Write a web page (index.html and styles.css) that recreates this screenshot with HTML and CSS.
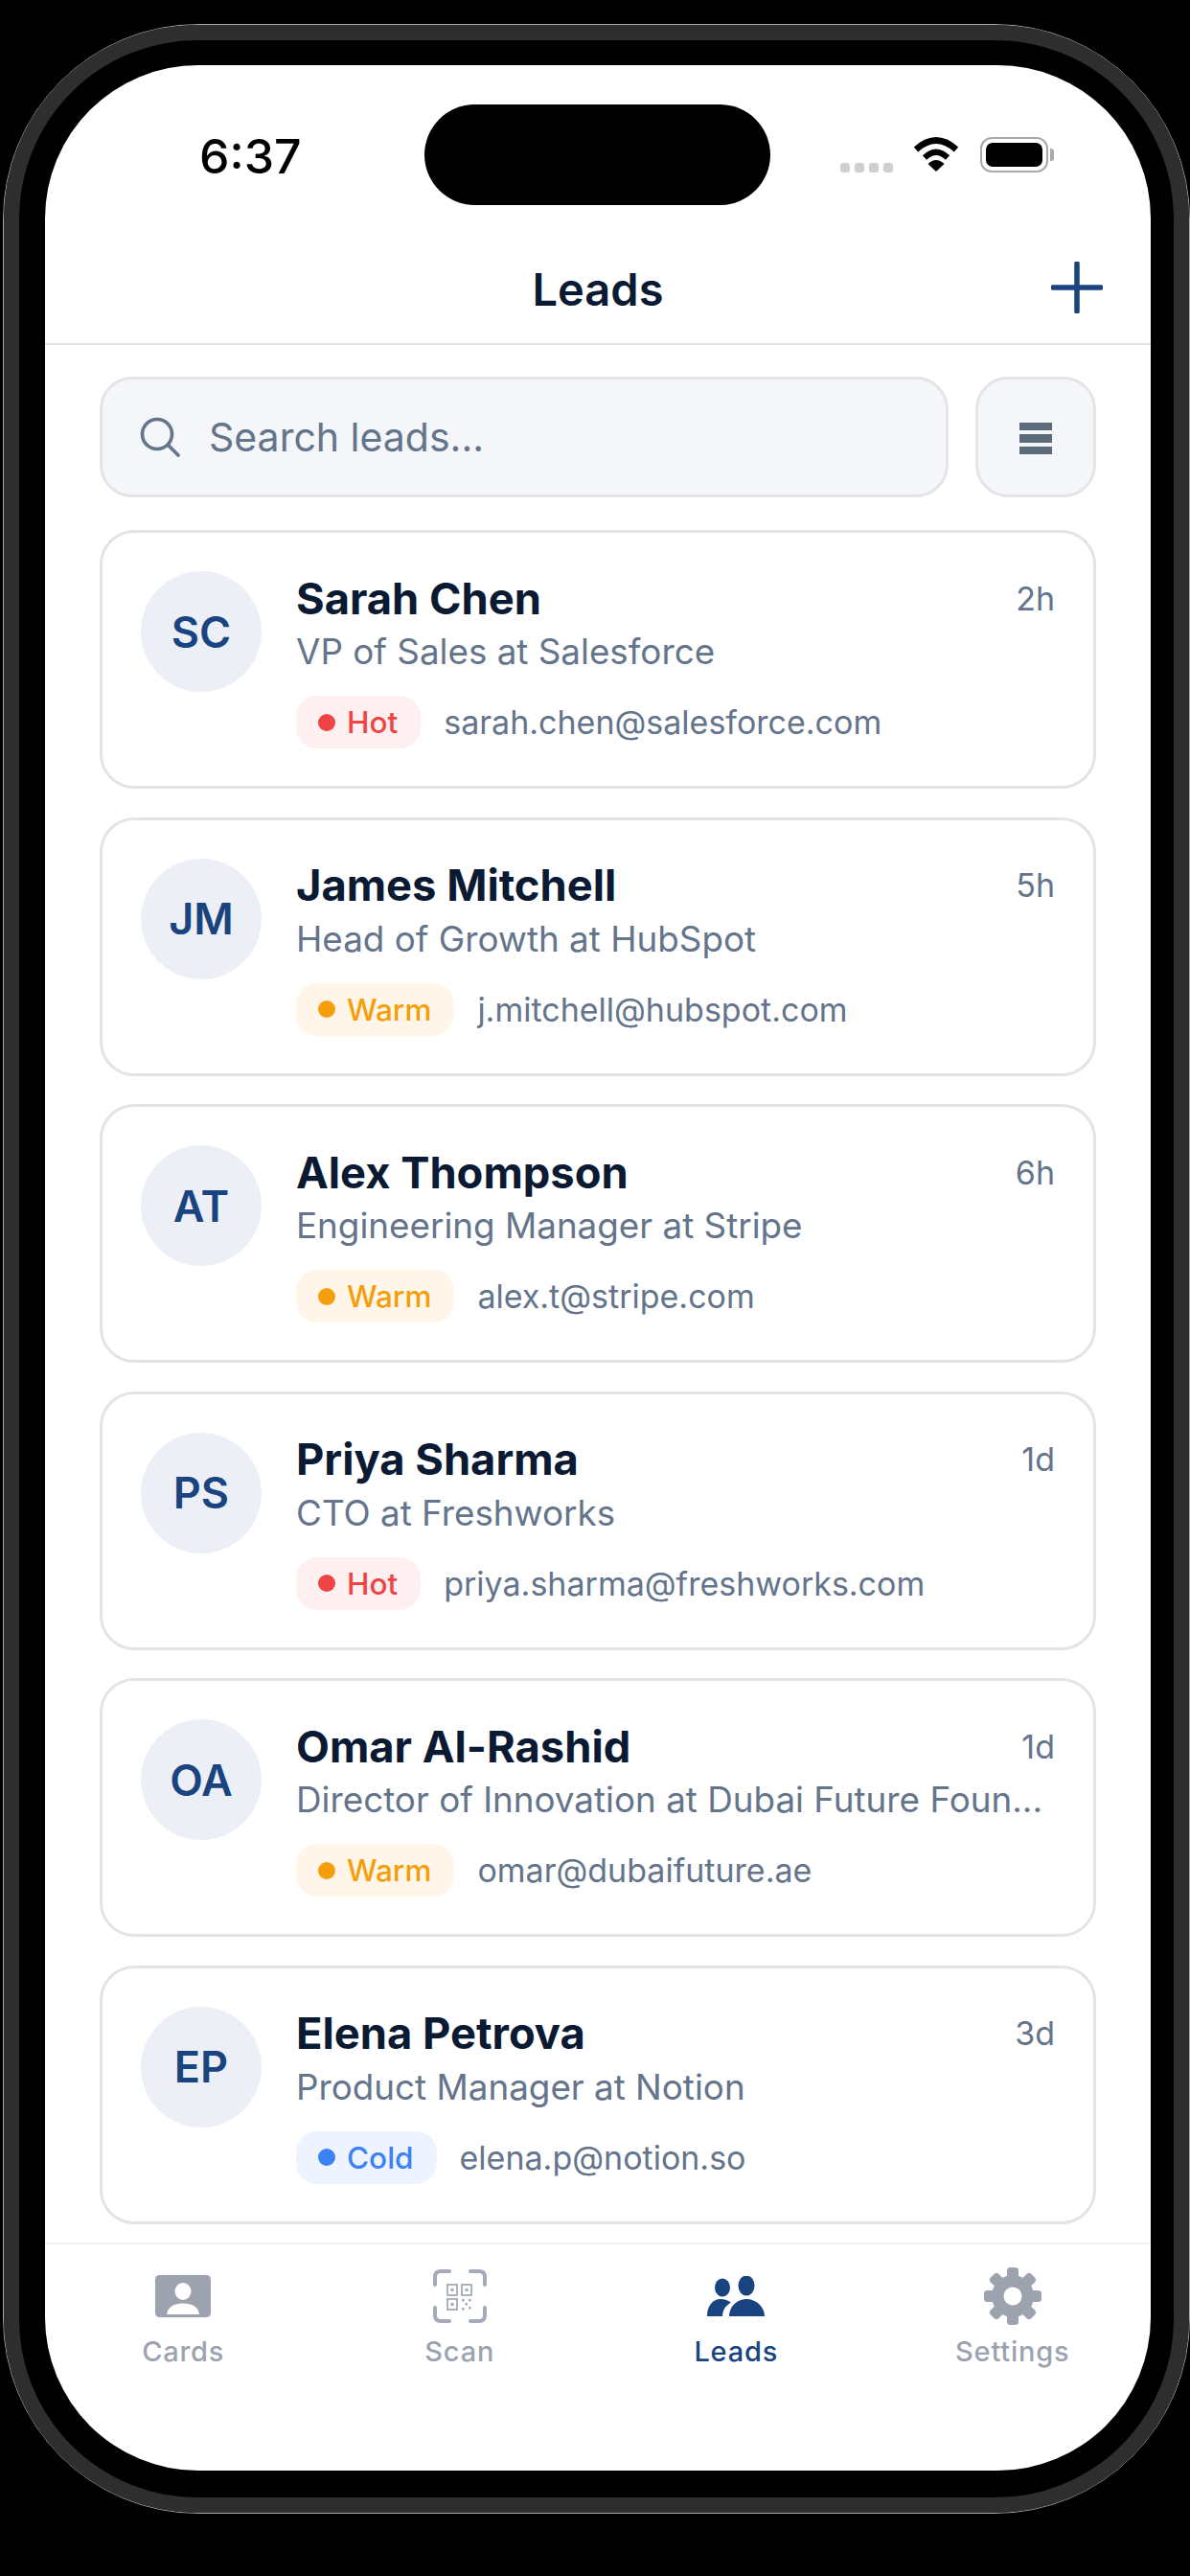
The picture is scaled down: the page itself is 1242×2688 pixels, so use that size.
FILE: index.html
```html
<!DOCTYPE html>
<html lang="en">
<head>
    <meta charset="UTF-8">
    <meta name="viewport" content="width=device-width, initial-scale=1.0">
    <title>Leads</title>
    <link rel="stylesheet" href="styles.css">
</head>
<body>
    <div class="phone">
        <div class="bezel">
            <div class="screen">
                <div class="island"></div>

                <div class="status-bar">
                    <span class="clock">6:37</span>
                    <div class="status-icons">
                        <div class="signal"><i></i><i></i><i></i><i></i></div>
                        <svg class="wifi" viewBox="0 0 48 36">
                            <path d="M3 13Q24 -6 45 13" fill="none" stroke="#000" stroke-width="6.5"/>
                            <path d="M12 21.5Q24 10 36 21.5" fill="none" stroke="#000" stroke-width="6"/>
                            <path d="M24 36L15.5 28Q24 20 32.5 28Z" fill="#000"/>
                        </svg>
                        <div class="battery"><div class="battery-level"></div></div>
                    </div>
                </div>

                <header class="nav">
                    <h1>Leads</h1>
                    <svg class="add" viewBox="0 0 54 54">
                        <path d="M27 2V52M2 27H52" fill="none" stroke="#1a4480" stroke-width="5.5" stroke-linecap="round"/>
                    </svg>
                </header>

                <div class="toolbar">
                    <div class="search">
                        <svg class="search-icon" viewBox="0 0 42 42">
                            <circle cx="18" cy="18" r="15.5" fill="none" stroke="#64748b" stroke-width="3.6"/>
                            <path d="M29.5 29.5L40 40" fill="none" stroke="#64748b" stroke-width="3.6" stroke-linecap="round"/>
                        </svg>
                        <span>Search leads...</span>
                    </div>
                    <div class="filter">
                        <div class="filter-icon"><i></i><i></i><i></i></div>
                    </div>
                </div>

                <div class="list">
                    <div class="card">
                        <div class="avatar">SC</div>
                        <div class="info">
                            <div class="top-row"><span class="name">Sarah Chen</span><span class="ago">2h</span></div>
                            <div class="role">VP of Sales at Salesforce</div>
                            <div class="meta">
                                <span class="badge hot"><i></i>Hot</span>
                                <span class="email">sarah.chen@salesforce.com</span>
                            </div>
                        </div>
                    </div>

                    <div class="card">
                        <div class="avatar">JM</div>
                        <div class="info">
                            <div class="top-row"><span class="name">James Mitchell</span><span class="ago">5h</span></div>
                            <div class="role">Head of Growth at HubSpot</div>
                            <div class="meta">
                                <span class="badge warm"><i></i>Warm</span>
                                <span class="email">j.mitchell@hubspot.com</span>
                            </div>
                        </div>
                    </div>

                    <div class="card">
                        <div class="avatar">AT</div>
                        <div class="info">
                            <div class="top-row"><span class="name">Alex Thompson</span><span class="ago">6h</span></div>
                            <div class="role">Engineering Manager at Stripe</div>
                            <div class="meta">
                                <span class="badge warm"><i></i>Warm</span>
                                <span class="email">alex.t@stripe.com</span>
                            </div>
                        </div>
                    </div>

                    <div class="card">
                        <div class="avatar">PS</div>
                        <div class="info">
                            <div class="top-row"><span class="name">Priya Sharma</span><span class="ago">1d</span></div>
                            <div class="role">CTO at Freshworks</div>
                            <div class="meta">
                                <span class="badge hot"><i></i>Hot</span>
                                <span class="email">priya.sharma@freshworks.com</span>
                            </div>
                        </div>
                    </div>

                    <div class="card">
                        <div class="avatar">OA</div>
                        <div class="info">
                            <div class="top-row"><span class="name">Omar Al-Rashid</span><span class="ago">1d</span></div>
                            <div class="role">Director of Innovation at Dubai Future Foun...</div>
                            <div class="meta">
                                <span class="badge warm"><i></i>Warm</span>
                                <span class="email">omar@dubaifuture.ae</span>
                            </div>
                        </div>
                    </div>

                    <div class="card">
                        <div class="avatar">EP</div>
                        <div class="info">
                            <div class="top-row"><span class="name">Elena Petrova</span><span class="ago">3d</span></div>
                            <div class="role">Product Manager at Notion</div>
                            <div class="meta">
                                <span class="badge cold"><i></i>Cold</span>
                                <span class="email">elena.p@notion.so</span>
                            </div>
                        </div>
                    </div>
                </div>

                <nav class="tabs">
                    <div class="tab">
                        <div class="tab-icon">
                            <svg width="58" height="44" viewBox="0 0 58 44">
                                <rect width="58" height="44" rx="4.5" fill="#9ca3af"/>
                                <ellipse cx="29" cy="17" rx="8.5" ry="9" fill="#fff"/>
                                <path d="M12 41C13 33 20 29.500 29 29.500S45 33 46 41Z" fill="#fff"/>
                            </svg>
                        </div>
                        <span>Cards</span>
                    </div>
                    <div class="tab">
                        <div class="tab-icon">
                            <svg width="56" height="56" viewBox="0 0 56 56">
                                <g fill="none" stroke="#a4abb8" stroke-width="4" stroke-linecap="round">
                                    <path d="M2 16V8Q2 2 8 2H17"/>
                                    <path d="M39 2H48Q54 2 54 8V16"/>
                                    <path d="M2 40V48Q2 54 8 54H17"/>
                                    <path d="M39 54H48Q54 54 54 48V40"/>
                                </g>
                                <g fill="none" stroke="#a4abb8" stroke-width="1.8">
                                    <rect x="15" y="16" width="10" height="11"/>
                                    <rect x="30" y="16" width="10" height="11"/>
                                    <rect x="15" y="31" width="10" height="11"/>
                                </g>
                                <g fill="#a4abb8">
                                    <rect x="18.500" y="20" width="3" height="3"/>
                                    <rect x="33.500" y="20" width="3" height="3"/>
                                    <rect x="18.500" y="35" width="3" height="3"/>
                                    <rect x="30" y="31" width="2.500" height="2.500"/>
                                    <rect x="37" y="31" width="2.500" height="2.500"/>
                                    <rect x="33.500" y="35" width="2.500" height="2.500"/>
                                    <rect x="30" y="40" width="2.500" height="2.500"/>
                                    <rect x="37" y="39" width="2.500" height="2.500"/>
                                </g>
                            </svg>
                        </div>
                        <span>Scan</span>
                    </div>
                    <div class="tab active">
                        <div class="tab-icon">
                            <svg width="60" height="42" viewBox="0 0 60 42">
                                <g fill="#1a4480">
                                    <ellipse cx="16" cy="12" rx="8" ry="9.500"/>
                                    <ellipse cx="41" cy="10" rx="8.500" ry="10.500"/>
                                    <path d="M0 42C0 31 6 24 14 24C18 24 21 25 25 27.500C19 31 16 36 16 42Z"/>
                                    <path d="M23 42C23 32 31 24 41 24S60 32 60 42Z"/>
                                </g>
                            </svg>
                        </div>
                        <span>Leads</span>
                    </div>
                    <div class="tab">
                        <div class="tab-icon">
                            <svg width="60" height="60" viewBox="0 0 60 60">
                                <g fill="#9ca3af">
                                    <rect x="24" y="0" width="12" height="60" rx="3.500"/>
                                    <rect x="24" y="0" width="12" height="60" rx="3.500" transform="rotate(45 30 30)"/>
                                    <rect x="24" y="0" width="12" height="60" rx="3.500" transform="rotate(90 30 30)"/>
                                    <rect x="24" y="0" width="12" height="60" rx="3.500" transform="rotate(135 30 30)"/>
                                    <circle cx="30" cy="30" r="22"/>
                                </g>
                                <circle cx="30" cy="30" r="9.500" fill="#fff"/>
                            </svg>
                        </div>
                        <span>Settings</span>
                    </div>
                </nav>
            </div>
        </div>
    </div>
</body>
</html>
```

FILE: styles.css
```css
* {
    box-sizing: border-box;
}
body {
    margin: 0;
    width: 1242px;
    height: 2688px;
    background: #000;
    font-family: Inter, "Noto Sans", sans-serif;
    overflow: hidden;
}
.phone {
    width: 1239px;
    height: 2598px;
    margin: 25px 0 0 3px;
    border: 1.5px solid #a8a8a8;
    border-radius: 204px;
}
.bezel {
    height: 100%;
    border: 16px solid #2e2e2e;
    border-radius: 202px;
    background: #000;
    padding: 26px 24px 28px 27px;
}
.screen {
    position: relative;
    height: 100%;
    background: #fff;
    border-radius: 160px;
    display: flex;
    flex-direction: column;
    overflow: hidden;
}
.island {
    position: absolute;
    top: 41px;
    left: 396px;
    width: 361px;
    height: 105px;
    border-radius: 53px;
    background: #000;
}

/* status bar */
.status-bar {
    height: 178px;
    flex-shrink: 0;
    display: flex;
    justify-content: space-between;
    padding: 67px 107px 0 161px;
}
.clock {
    font-size: 50px;
    font-weight: 500;
    line-height: 56px;
    color: #000;
}
.status-icons {
    display: flex;
    align-items: flex-start;
    padding-top: 8px;
}
.signal {
    display: flex;
    gap: 5px;
    margin-top: 27px;
    margin-right: 21px;
}
.signal i {
    width: 10px;
    height: 10px;
    border-radius: 3px;
    background: #cfcfcf;
}
.wifi {
    width: 48px;
    height: 36px;
    margin-right: 22px;
}
.battery {
    position: relative;
    width: 71px;
    height: 37px;
    padding: 4px;
    border: 2px solid #a9a9a9;
    border-radius: 12px;
}
.battery::after {
    content: "";
    position: absolute;
    top: 10px;
    right: -8px;
    width: 4px;
    height: 13px;
    border-radius: 0 3px 3px 0;
    background: #a9a9a9;
}
.battery-level {
    height: 100%;
    border-radius: 7px;
    background: #000;
}

/* nav */
.nav {
    position: relative;
    height: 114px;
    flex-shrink: 0;
    display: flex;
    align-items: center;
    justify-content: center;
    border-bottom: 2.5px solid #e3e5e8;
    padding-bottom: 2px;
}
.nav h1 {
    margin: 0;
    font-size: 47px;
    font-weight: 600;
    color: #0b1a33;
}
.add {
    position: absolute;
    right: 50px;
    top: 27px;
    width: 54px;
    height: 54px;
}

/* search row */
.toolbar {
    display: flex;
    gap: 28px;
    padding: 33px 57px 0 57px;
    flex-shrink: 0;
}
.search {
    flex: 1;
    height: 126px;
    display: flex;
    align-items: center;
    gap: 30px;
    padding-left: 39px;
    background: #f4f6fa;
    border: 3px solid #e2e4e6;
    border-radius: 34px;
    font-size: 41px;
    color: #64748b;
}
.search-icon {
    width: 42px;
    height: 42px;
}
.filter {
    width: 126px;
    height: 126px;
    display: flex;
    align-items: center;
    justify-content: center;
    background: #f4f6fa;
    border: 3px solid #e2e4e6;
    border-radius: 34px;
}
.filter-icon {
    display: flex;
    flex-direction: column;
    gap: 4px;
    width: 34px;
    margin-top: 3px;
}
.filter-icon i {
    height: 8.500px;
    background: #5b6b7c;
}

/* lead cards */
.list {
    flex: 1;
    display: flex;
    flex-direction: column;
    gap: 29.500px;
    padding: 34px 57px 0 57px;
}
.card {
    height: 270px;
    flex-shrink: 0;
    display: flex;
    gap: 36px;
    padding: 40px 40px 0 40px;
    border: 3px solid #e2e4e6;
    border-radius: 36px;
    background: #fff;
}
.avatar {
    width: 126px;
    height: 126px;
    flex-shrink: 0;
    display: flex;
    align-items: center;
    justify-content: center;
    border-radius: 50%;
    background: #ecf0f6;
    color: #1a4480;
    font-size: 45px;
    font-weight: 600;
}
.info {
    flex: 1;
    min-width: 0;
}
.top-row {
    display: flex;
    justify-content: space-between;
    align-items: center;
    height: 56px;
}
.name {
    font-size: 45.300px;
    font-weight: 700;
    color: #0b1a33;
}
.ago {
    font-size: 34px;
    color: #64748b;
}
.role {
    margin-top: 5px;
    font-size: 36.800px;
    line-height: 46px;
    color: #64748b;
    white-space: nowrap;
}
.meta {
    display: flex;
    align-items: center;
    gap: 24px;
    margin-top: 23px;
}
.badge {
    height: 55px;
    display: flex;
    align-items: center;
    gap: 12px;
    padding: 0 24px 0 23px;
    border-radius: 22px;
    font-size: 31.500px;
    font-weight: 500;
}
.badge i {
    width: 18px;
    height: 18px;
    border-radius: 50%;
    background: currentColor;
}
.badge.hot {
    background: #fef0f0;
    color: #ef4444;
}
.badge.warm {
    background: #fff6e9;
    color: #f59e0b;
}
.badge.cold {
    background: #edf4ff;
    color: #3b82f6;
}
.email {
    font-size: 34px;
    color: #64748b;
}

/* tab bar */
.tabs {
    height: 238px;
    flex-shrink: 0;
    display: grid;
    grid-template-columns: repeat(4, 1fr);
    border-top: 2px solid #eef0f2;
    padding-top: 23px;
}
.tab {
    display: flex;
    flex-direction: column;
    align-items: center;
    font-size: 29px;
    font-weight: 500;
    letter-spacing: 0.8px;
    color: #9ca3af;
}
.tab.active {
    color: #1a4480;
}
.tab-icon {
    height: 62px;
    display: flex;
    align-items: center;
    justify-content: center;
    margin-bottom: 9px;
}
```
